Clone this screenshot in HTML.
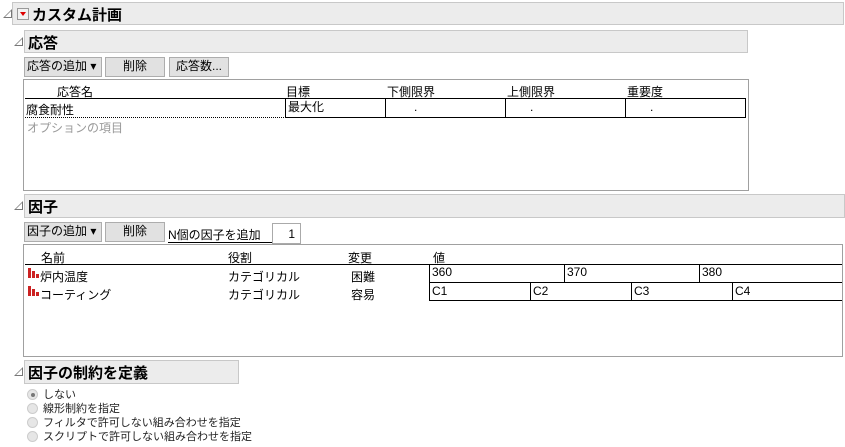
<!DOCTYPE html>
<html><head><meta charset="utf-8"><style>
*{margin:0;padding:0;box-sizing:border-box}
body{width:845px;height:447px;background:#fff;position:relative;overflow:hidden;font-family:"Liberation Sans","Noto Sans CJK JP",sans-serif;font-size:12px;color:#000}
.a{position:absolute;white-space:nowrap}
.bar{position:absolute;background:#ececec;border:1px solid #c8c8c8}
.bar b{position:absolute;left:3px;top:1px;font-size:15px;font-weight:bold}
.tri{position:absolute;width:0;height:0;border-left:9px solid transparent;border-bottom:9px solid #777}
.tri:after{content:"";position:absolute;left:-7px;top:2px;border-left:6px solid transparent;border-bottom:6px solid #fff}
.btn{position:absolute;height:20px;background:#e1e1e1;border:1px solid #adadad;font-size:12px;text-align:center;line-height:17px}
.box{position:absolute;border:1px solid #a0a0a0;background:#fff}
.c{position:absolute;border:1px solid #000;font-size:12px;line-height:17px;padding-left:2px}
.rad{position:absolute;left:27px;width:11px;height:11px;border-radius:50%;background:#e6e6e6;border:1px solid #ccc}
.rt{position:absolute;left:43px;font-size:11px;color:#222}
.ic{position:absolute;width:11px;height:10px}
</style></head><body>
<div class="tri" style="left:3px;top:9px"></div>
<div class="bar" style="left:12px;top:2px;width:832px;height:23px">
 <div class="a" style="left:4px;top:5px;width:12px;height:12px;border:1px solid #999;background:#f2f2f2"><div class="a" style="left:2px;top:3px;border-left:3px solid transparent;border-right:3px solid transparent;border-top:4px solid #d00"></div></div>
 <b style="left:19px;top:1px">カスタム計画</b></div>

<div class="tri" style="left:14px;top:37px"></div>
<div class="bar" style="left:24px;top:30px;width:724px;height:23px"><b>応答</b></div>
<div class="btn" style="left:24px;top:57px;width:78px;text-align:left;padding-left:2px">応答の追加 ▾</div>
<div class="btn" style="left:105px;top:57px;width:60px">削除</div>
<div class="btn" style="left:169px;top:57px;width:60px">応答数...</div>
<div class="box" style="left:23px;top:79px;width:726px;height:112px"></div>
<div class="a" style="left:57px;top:83px">応答名</div>
<div class="a" style="left:286px;top:83px">目標</div>
<div class="a" style="left:387px;top:83px">下側限界</div>
<div class="a" style="left:507px;top:83px">上側限界</div>
<div class="a" style="left:627px;top:83px">重要度</div>
<div class="a" style="left:25px;top:98px;width:721px;height:20px;border:1px dotted #000;border-left:none"></div>
<div class="a" style="left:25px;top:98px;width:721px;border-top:1px solid #000"></div>
<div class="a" style="left:26px;top:101px">腐食耐性</div>
<div class="c" style="left:285px;top:98px;width:101px;height:20px">最大化</div>
<div class="c" style="left:385px;top:98px;width:121px;height:20px;padding-left:28px">.</div>
<div class="c" style="left:505px;top:98px;width:121px;height:20px;padding-left:24px">.</div>
<div class="c" style="left:625px;top:98px;width:121px;height:20px;padding-left:24px">.</div>
<div class="a" style="left:27px;top:119px;color:#999">オプションの項目</div>

<div class="tri" style="left:14px;top:201px"></div>
<div class="bar" style="left:24px;top:194px;width:821px;height:24px"><b>因子</b></div>
<div class="btn" style="left:24px;top:222px;width:78px;text-align:left;padding-left:2px">因子の追加 ▾</div>
<div class="btn" style="left:105px;top:222px;width:60px">削除</div>
<div class="a" style="left:168px;top:226px;width:104px;height:17px;border-bottom:1px solid #000">N個の因子を追加</div>
<div class="a" style="left:272px;top:223px;width:29px;height:21px;border:1px solid #aaa;text-align:right;padding:3px 5px 0 0">1</div>
<div class="box" style="left:23px;top:244px;width:820px;height:113px"></div>
<div class="a" style="left:41px;top:249px">名前</div>
<div class="a" style="left:228px;top:249px">役割</div>
<div class="a" style="left:348px;top:249px">変更</div>
<div class="a" style="left:433px;top:249px">値</div>
<div class="a" style="left:25px;top:264px;width:817px;border-top:1px solid #000"></div>
<svg class="ic" style="left:28px;top:268px" viewBox="0 0 11 10"><rect x="0" y="0" width="3" height="10" fill="#c22"/><rect x="4" y="3" width="3" height="7" fill="#c22"/><rect x="8" y="6" width="3" height="4" fill="#c22"/></svg>
<svg class="ic" style="left:28px;top:286px" viewBox="0 0 11 10"><rect x="0" y="0" width="3" height="10" fill="#c22"/><rect x="4" y="3" width="3" height="7" fill="#c22"/><rect x="8" y="6" width="3" height="4" fill="#c22"/></svg>
<div class="a" style="left:40px;top:268px">炉内温度</div>
<div class="a" style="left:40px;top:286px">コーティング</div>
<div class="a" style="left:228px;top:268px">カテゴリカル</div>
<div class="a" style="left:228px;top:286px">カテゴリカル</div>
<div class="a" style="left:351px;top:268px">困難</div>
<div class="a" style="left:351px;top:286px">容易</div>
<div class="c" style="left:429px;top:264px;width:136px;height:19px;border-top:none">360</div>
<div class="c" style="left:564px;top:264px;width:136px;height:19px;border-top:none">370</div>
<div class="c" style="left:699px;top:264px;width:143px;height:19px;border-top:none;border-right:none">380</div>
<div class="c" style="left:429px;top:282px;width:102px;height:19px">C1</div>
<div class="c" style="left:530px;top:282px;width:102px;height:19px">C2</div>
<div class="c" style="left:631px;top:282px;width:102px;height:19px">C3</div>
<div class="c" style="left:732px;top:282px;width:110px;height:19px;border-right:none">C4</div>

<div class="tri" style="left:14px;top:367px"></div>
<div class="bar" style="left:24px;top:360px;width:215px;height:24px"><b>因子の制約を定義</b></div>
<div class="rad" style="top:389px"><div class="a" style="left:3px;top:3px;width:4px;height:4px;border-radius:50%;background:#777"></div></div>
<div class="rt" style="top:386px">しない</div>
<div class="rad" style="top:403px"></div><div class="rt" style="top:400px">線形制約を指定</div>
<div class="rad" style="top:417px"></div><div class="rt" style="top:414px">フィルタで許可しない組み合わせを指定</div>
<div class="rad" style="top:431px"></div><div class="rt" style="top:428px">スクリプトで許可しない組み合わせを指定</div>
</body></html>
